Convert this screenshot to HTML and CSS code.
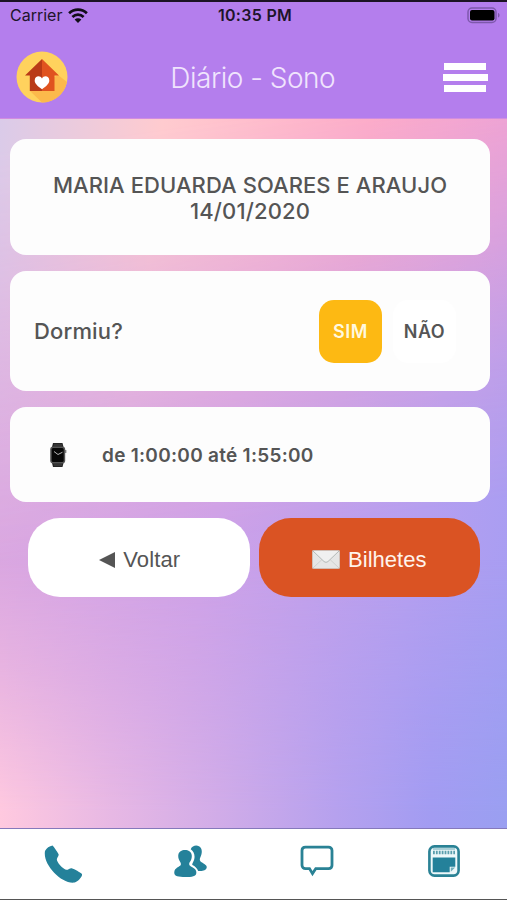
FILE: index.html
```html
<!DOCTYPE html>
<html lang="pt-BR">
<head>
<meta charset="utf-8">
<meta name="viewport" content="width=device-width, initial-scale=1">
<title>Diário - Sono</title>
<link rel="stylesheet" href="styles.css">
</head>
<body>
<div class="app">
  <header class="header">
    <div class="status">
      <div class="status-left"><span class="carrier">Carrier</span>
        <svg class="wifi" viewBox="0 0 20 15"><g fill="none" stroke="#110d18" stroke-width="2.7"><path d="M1.100 5.300C6.200.4 13.800.4 18.900 5.300"/><path d="M4.400 8.900c3.200-3 8-3 11.200 0"/></g><path fill="#110d18" d="M6.600 11.500c2-1.800 4.800-1.800 6.800 0L10 15z"/></svg>
      </div>
      <span class="clock">10:35 PM</span>
      <svg class="battery" viewBox="0 0 33 17"><rect x="1" y="1" width="28" height="14.500" rx="4" fill="none" stroke="#7e58ac" stroke-width="1.500"/><rect x="3" y="3" width="24.500" height="10.500" rx="2" fill="#000"/><path d="M31 6c2 .5 2 4 0 4.500z" fill="#7e58ac"/></svg>
    </div>
    <div class="bar">
      <svg class="logo" viewBox="0 0 52 52"><circle cx="26" cy="26" r="25.500" fill="#ffd25d"/><path d="M42 24 51 31A25.500 25.500 0 0 1 26 51.500L14 40z" fill="#fcb94b"/><path d="M26 8 9 24.500h4.800V40H26z" fill="#b93a17"/><path d="m26 8 17 16.500h-4.500V40H26z" fill="#e0531f"/><path d="M26 38.200c-4.500-3.400-7.300-5.500-7.300-8.800 0-4.700 5.500-5.500 7.300-2 1.800-3.500 7.300-2.700 7.300 2 0 3.300-2.800 5.400-7.300 8.800z" fill="#fff"/></svg>
      <h1 class="title">Diário - Sono</h1>
      <div class="menu"><i></i><i></i><i></i></div>
    </div>
  </header>
  <main class="content">
    <section class="card student"><span class="name">MARIA EDUARDA SOARES E ARAUJO</span><span class="date">14/01/2020</span></section>
    <section class="card question">
      <span class="label">Dormiu?</span>
      <div class="options"><span class="option selected"><b>SIM</b></span><span class="option"><b>NÃO</b></span></div>
    </section>
    <section class="card period">
      <svg class="watch" viewBox="0 0 18 26"><path d="M4 1h9.500l1 4H3zM3 21h11.500l-1 4H4z" fill="#252525"/><path d="M5 3h8M5 23h8" stroke="#555" stroke-width=".7"/><rect x="1.200" y="4.500" width="15" height="17" rx="3" fill="#555"/><rect x="2.700" y="6" width="12" height="14" rx="1.500" fill="#080808"/><path d="m5 9.500 4 3 4.500-2.300" fill="none" stroke="#b5b5b5"/><path d="M16.700 8v3" stroke="#777" stroke-width="1.300"/></svg>
      <span class="time">de 1:00:00 até 1:55:00</span>
    </section>
    <div class="actions">
      <div class="button back"><svg class="arrow" viewBox="0 0 16 16"><path d="M0 8 16 0v16z" fill="#555"/></svg><span>Voltar</span></div>
      <div class="button notes"><svg class="mail" viewBox="0 0 28 19"><rect x=".4" y=".4" width="27.200" height="18.200" rx="1" fill="#e6e6e6" stroke="#c9c9c7" stroke-width=".8"/><path d="m1 18 9-8.500M27 18l-9-8.500" stroke="#cfd1d0" fill="none"/><path d="m1 1 11 10.500c1.300 1 2.700 1 4 0L27 1" fill="#f0f0f0" stroke="#b4bab8"/></svg><span>Bilhetes</span></div>
    </div>
  </main>
  <nav class="tabs">
    <div><svg class="phone" viewBox="0 0 38 38"><path d="M1 6C2.500 3 5.500 1 8.500.500c1.800 1.800 5 6.500 6 8.500.8 2-2.300 3.800-1.500 6.500 1.500 3.500 5 7.500 9 9.300 2.200.5 3.800-2 5.700-1.600 3 1 8.300 4 10.300 5.800.8 1.700-3.500 7.200-7.300 8.500C17.500 39.500-1.500 19.500 1 6z"/></svg></div>
    <div><svg class="people" viewBox="0 0 33 33"><path d="M15.500 20.200c-.7-1.500-.2-2.700 1-4.200 1-1.500 1.500-3.700 1.200-6-.5-3.300-3.300-5-6.700-5S4.800 6.700 4.300 10c-.3 2.300.4 4.700 1.500 6.200 1 1.500 1.500 2.700.8 4-1 1.500-5.900 2.500-6.300 6.700-.5 4.800 4 5.100 11 5.100s11.500-.4 11-5.200c-.4-4.100-5.800-4.900-6.800-6.600z"/><path d="M16.700 4.300C18.500-.3 24.800-.5 27 3.200c1.500 2.500.6 6.300-.5 8.800-1.100 2.300-.9 3.700.7 4.900 2.200 1.600 6 3 5.500 5.700-.7 3.500-5.100 3.700-8.500 3.300-1.200-2.800-3.100-4.500-5.800-5.900-.8-1 1.300-3.600 1.800-5.600 1-4-.1-7.500-3.500-10.100z"/></svg></div>
    <div><svg class="chat" viewBox="0 0 34 32"><path d="M5.500 2.200h23c2 0 3.500 1.400 3.500 3.300v14.800c0 2-1.500 3.300-3.500 3.300H15.800l-3.300 5-3-5h-4c-2 0-3.500-1.400-3.500-3.300V5.500c0-2 1.500-3.300 3.500-3.300z" fill="none" stroke="#2a8295" stroke-width="2.800"/></svg></div>
    <div><svg class="calendar" viewBox="0 0 32 32"><rect x="1.400" y="1.400" width="29.200" height="29.200" rx="5" fill="#eef8fa" stroke="#2a8295" stroke-width="2.600"/><path d="M5 7.500h22" stroke="#5b9ead" stroke-width="3.500" stroke-dasharray="1.800 1.100"/><path d="M5 4h22" stroke="#69a8b5"/><path d="M4.700 12.500h22.600v9.200h-5.600v5.600H4.700z"/><path d="m22.800 26.800 4.400-4.300h-4.400z" fill="#72afbb"/></svg></div>
  </nav>
</div>
</body>
</html>
```
FILE: styles.css
```css
* { box-sizing: border-box; }
body { margin: 0; font-family: Inter, sans-serif; color: #555; }
.app { height: 900px; display: flex; flex-direction: column; overflow: hidden; }
svg { display: block; flex: none; }

.header { height: 119px; background: #b47eed; border-top: 2px solid #1c1324; border-bottom: 1px solid #d18de0; flex: none; }
.status { height: 26px; display: grid; grid-template-columns: 1fr auto 1fr; align-items: center; padding: 0 7px 0 10px; color: #1e142a; font-size: 16px; }
.status-left { display: flex; align-items: center; gap: 6px; }
.wifi { width: 20px; height: 15px; }
.clock { font-weight: 600; letter-spacing: .3px; }
.battery { width: 33px; height: 17px; justify-self: end; }
.bar { height: 90px; display: grid; grid-template-columns: 52px 1fr 52px; align-items: center; padding: 9px 16px 0 15.500px; }
.logo { width: 52px; height: 52px; margin-top: -1px; }
.title { margin: 0 1px 0 0; text-align: center; font-size: 28px; line-height: 34px; font-weight: 300; letter-spacing: -.5px; color: #f0e4fd; white-space: nowrap; }
.menu { height: 29px; display: flex; flex-direction: column; align-items: center; justify-content: space-between; }
.menu i { width: 42px; height: 7px; background: #fff; }
.menu i:nth-child(2) { width: 45px; }

.content {
  position: relative; isolation: isolate; height: 709px; flex: none; padding: 20px 17px 0 10px;
  display: flex; flex-direction: column; gap: 16px;
  background: linear-gradient(100deg, #dfa9df 0%, #cea1e8 45%, #b59ff0 78%, #a39df3 100%);
}
.content::before, .content::after { content: ""; position: absolute; inset: 0; z-index: -1; }
.content::before {
  background: linear-gradient(96deg, #dacbe9 0%, #ffcbcf 28%, #ffacc7 64%, #ee9fd6 100%);
  -webkit-mask-image: linear-gradient(172deg, #000 4%, rgba(0,0,0,.6) 24%, rgba(0,0,0,.25) 40%, transparent 58%);
  mask-image: linear-gradient(172deg, #000 4%, rgba(0,0,0,.6) 24%, rgba(0,0,0,.25) 40%, transparent 58%);
}
.content::after {
  background: linear-gradient(90deg, #ffc9df 0%, #e7b8e4 22%, #d1ace8 43%, #b6a1ee 66%, #a29cf2 85%, #9a9ff1 100%);
  -webkit-mask-image: linear-gradient(transparent 62%, rgba(0,0,0,.4) 78%, #000 98%);
  mask-image: linear-gradient(transparent 62%, rgba(0,0,0,.4) 78%, #000 98%);
}
.card { width: 480px; border-radius: 16px; background: #fdfdfd; flex: none; }
.student { height: 116px; padding-top: 33px; display: flex; flex-direction: column; align-items: center; font-size: 22px; line-height: 26px; font-weight: 500; }
.name { letter-spacing: .07px; }
.date { letter-spacing: .15px; }
.question { height: 120px; padding: 0 34px 0 24px; display: flex; align-items: center; justify-content: space-between; }
.label { font-size: 22px; font-weight: 500; letter-spacing: .15px; }
.options { display: flex; gap: 11px; }
.option { width: 63px; height: 63px; border-radius: 15px; display: flex; align-items: center; justify-content: center; background: #fff; font-size: 18px; }
.option b { font-weight: 600; letter-spacing: .5px; }
.selected { background: #fdb913; color: #fff8df; }
.period { height: 95px; padding: 1px 0 0 39px; display: flex; align-items: center; gap: 35px; }
.watch { width: 18px; height: 26px; }
.time { font-size: 19px; font-weight: 600; letter-spacing: .28px; }
.actions { display: flex; gap: 9px; padding-left: 18px; }
.button { width: 221.500px; height: 79px; border-radius: 32px; display: flex; align-items: center; justify-content: center; gap: 8px; padding-top: 4px; font: 22px "Liberation Sans", sans-serif; flex: none; }
.back { background: #fff; padding-left: 2px; letter-spacing: .15px; }
.notes { background: #da5323; color: #fff4ec; }
.arrow { width: 16px; height: 16px; }
.mail { width: 28px; height: 19px; }

.tabs { height: 72px; background: #fff; border-top: 1px solid #8579bb; border-bottom: 1px solid #555; display: grid; grid-template-columns: repeat(4, 1fr); padding-top: 16px; fill: #24819a; }
.tabs div { display: flex; justify-content: center; }
.phone { width: 38px; height: 38px; }
.people { width: 33px; height: 33px; }
.chat { width: 34px; height: 32px; }
.calendar { width: 32px; height: 32px; }
```
